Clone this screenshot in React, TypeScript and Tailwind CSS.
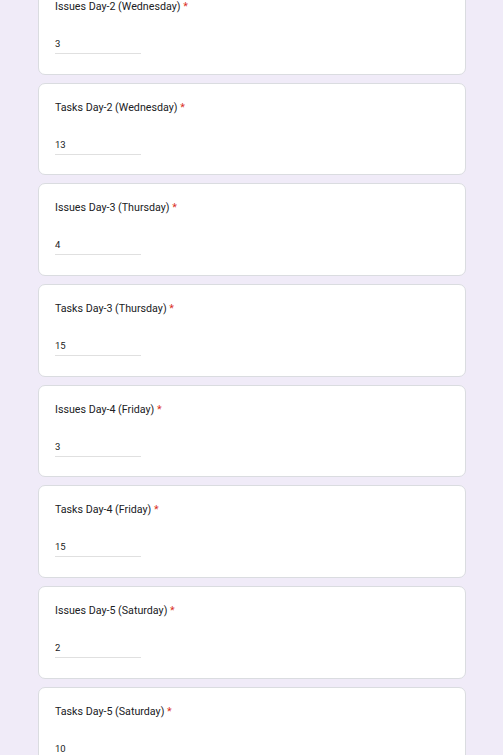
const questions = [
  { label: 'Issues Day-2 (Wednesday)', value: '3' },
  { label: 'Tasks Day-2 (Wednesday)', value: '13' },
  { label: 'Issues Day-3 (Thursday)', value: '4' },
  { label: 'Tasks Day-3 (Thursday)', value: '15' },
  { label: 'Issues Day-4 (Friday)', value: '3' },
  { label: 'Tasks Day-4 (Friday)', value: '15' },
  { label: 'Issues Day-5 (Saturday)', value: '2' },
  { label: 'Tasks Day-5 (Saturday)', value: '10' },
];

export default function App() {
  return (
    <div
      className="h-[755px] overflow-hidden bg-[#f0ebf8] text-[#202124]"
      style={{ fontFamily: 'Roboto, "Liberation Sans", sans-serif' }}
    >
      <div className="mt-[-18px] ml-[38px] w-[428px] flex flex-col gap-[8px]">
        {questions.map((q) => (
          <div
            key={q.label}
            className="h-[92.7px] shrink-0 rounded-[7px] border border-[#dadce0] bg-white pl-[16px] pt-[16px]"
          >
            <div className="text-[10.7px] leading-[16px]">
              {q.label} <span className="text-[#d93025]">*</span>
            </div>
            <div className="mt-[22px] w-[86px] border-b border-[#e0e0e0] pb-[3px] text-[9.5px] leading-[13px]">
              {q.value}
            </div>
          </div>
        ))}
      </div>
    </div>
  );
}
